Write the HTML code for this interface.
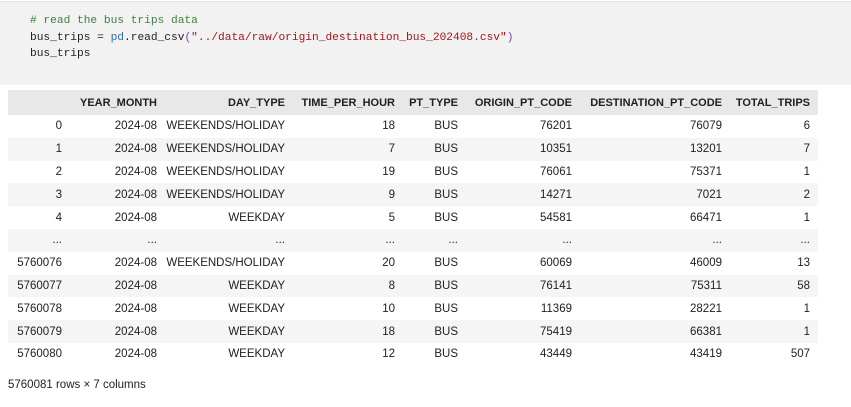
<!DOCTYPE html>
<html><head><meta charset="utf-8"><style>
body{margin:0;width:851px;height:407px;background:#fff;overflow:hidden;font-family:"Segoe UI","Liberation Sans",sans-serif;}
.code{position:absolute;left:0;top:1px;width:851px;height:83px;background:#f2f2f2;border-top:1px solid #e6e6e6;}
pre{margin:0;position:absolute;left:30px;top:11px;font-family:"Liberation Mono",monospace;font-size:11.2px;line-height:16.5px;color:#212121;}
.c{color:#3f7f3f}.s{color:#a31515}.f{color:#2c6ea8}.p{color:#7b3fb8}
table{position:absolute;left:8px;top:90px;border-collapse:collapse;table-layout:fixed;font-size:11.5px;color:#212121;width:810px}
td,th{height:22.8px;padding:0 8px 0 0;text-align:right;white-space:nowrap;box-sizing:border-box;overflow:hidden}
th{height:25px;font-weight:bold;font-size:11px}
thead tr{background:#e8e8e8}
tbody tr:nth-child(even){background:#f5f5f5}
.ft{position:absolute;left:8px;top:379px;font-size:11.5px;color:#212121}
</style></head><body>
<div class="code"><pre><span class="c"># read the bus trips data</span>
bus_trips = <span class="f">pd</span>.read_csv<span class="p">(</span><span class="s">"../data/raw/origin_destination_bus_202408.csv"</span><span class="p">)</span>
bus_trips</pre></div>
<table>
<colgroup><col style="width:62px"><col style="width:95px"><col style="width:128px"><col style="width:110px"><col style="width:63px"><col style="width:114px"><col style="width:150px"><col style="width:88px"></colgroup>
<thead><tr><th></th><th>YEAR_MONTH</th><th>DAY_TYPE</th><th>TIME_PER_HOUR</th><th>PT_TYPE</th><th>ORIGIN_PT_CODE</th><th>DESTINATION_PT_CODE</th><th>TOTAL_TRIPS</th></tr></thead>
<tbody>
<tr><td>0</td><td>2024-08</td><td>WEEKENDS/HOLIDAY</td><td>18</td><td>BUS</td><td>76201</td><td>76079</td><td>6</td></tr>
<tr><td>1</td><td>2024-08</td><td>WEEKENDS/HOLIDAY</td><td>7</td><td>BUS</td><td>10351</td><td>13201</td><td>7</td></tr>
<tr><td>2</td><td>2024-08</td><td>WEEKENDS/HOLIDAY</td><td>19</td><td>BUS</td><td>76061</td><td>75371</td><td>1</td></tr>
<tr><td>3</td><td>2024-08</td><td>WEEKENDS/HOLIDAY</td><td>9</td><td>BUS</td><td>14271</td><td>7021</td><td>2</td></tr>
<tr><td>4</td><td>2024-08</td><td>WEEKDAY</td><td>5</td><td>BUS</td><td>54581</td><td>66471</td><td>1</td></tr>
<tr><td>...</td><td>...</td><td>...</td><td>...</td><td>...</td><td>...</td><td>...</td><td>...</td></tr>
<tr><td>5760076</td><td>2024-08</td><td>WEEKENDS/HOLIDAY</td><td>20</td><td>BUS</td><td>60069</td><td>46009</td><td>13</td></tr>
<tr><td>5760077</td><td>2024-08</td><td>WEEKDAY</td><td>8</td><td>BUS</td><td>76141</td><td>75311</td><td>58</td></tr>
<tr><td>5760078</td><td>2024-08</td><td>WEEKDAY</td><td>10</td><td>BUS</td><td>11369</td><td>28221</td><td>1</td></tr>
<tr><td>5760079</td><td>2024-08</td><td>WEEKDAY</td><td>18</td><td>BUS</td><td>75419</td><td>66381</td><td>1</td></tr>
<tr><td>5760080</td><td>2024-08</td><td>WEEKDAY</td><td>12</td><td>BUS</td><td>43449</td><td>43419</td><td>507</td></tr>
</tbody></table>
<div class="ft">5760081 rows × 7 columns</div>
</body></html>
